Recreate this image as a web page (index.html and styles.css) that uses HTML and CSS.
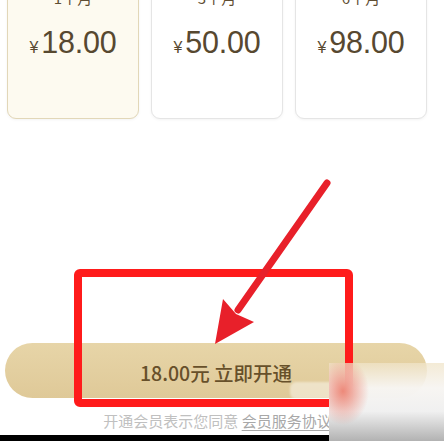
FILE: index.html
```html
<!DOCTYPE html>
<html lang="zh-CN">
<head>
<meta charset="utf-8">
<title>开通会员</title>
<link rel="stylesheet" href="styles.css">
</head>
<body>
<div class="page">
  <div class="plans">
    <div class="plan active">
      <div class="plan-name">1个月</div>
      <div class="plan-price"><span class="cur">¥</span>18.00</div>
    </div>
    <div class="plan">
      <div class="plan-name">3个月</div>
      <div class="plan-price"><span class="cur">¥</span>50.00</div>
    </div>
    <div class="plan">
      <div class="plan-name">6个月</div>
      <div class="plan-price"><span class="cur">¥</span>98.00</div>
    </div>
  </div>
  <button class="buy">18.00元 立即开通</button>
  <p class="agree">开通会员表示您同意 <a class="agree-link">会员服务协议</a></p>
  <div class="bottom-bar"></div>
</div>
<div class="glare"></div>
<div class="highlight-box"></div>
<svg class="arrow" width="444" height="441" viewBox="0 0 444 441">
  <line x1="327" y1="183" x2="238" y2="310" stroke="#e8202a" stroke-width="7" stroke-linecap="round"/>
  <polygon points="215,344 223,299 236,314 254,322" fill="#e8202a"/>
</svg>
<div class="watermark"></div>
</body>
</html>
```

FILE: styles.css
```css
html, body {
  margin: 0;
  padding: 0;
  width: 444px;
  height: 441px;
  overflow: hidden;
  background: #ffffff;
}

.page {
  padding-left: 7px;
  width: 421px;
  display: flex;
  flex-direction: column;
  font-family: "Liberation Sans", "Noto Sans CJK SC", sans-serif;
}

.plans {
  display: grid;
  grid-template-columns: repeat(3, 132px);
  column-gap: 12px;
  margin-top: -26px;
}

.plan {
  box-sizing: border-box;
  height: 145px;
  border: 1.5px solid #e5e5e5;
  border-radius: 9px;
  padding-top: 13px;
  display: flex;
  flex-direction: column;
  align-items: center;
  background: #ffffff;
  box-shadow: 0 1px 3px rgba(0, 0, 0, 0.05);
}

.plan.active {
  background: #fdfaf0;
  border-color: #e2d7b8;
}

.plan-name {
  font-family: "Noto Sans CJK SC", sans-serif;
  font-size: 15px;
  line-height: 20px;
  color: #5f4e33;
}

.plan-price {
  margin-top: 16px;
  font-size: 30.5px;
  line-height: 36px;
  color: #574830;
  letter-spacing: -0.2px;
}

.cur {
  font-size: 16px;
  margin-right: 3px;
}

.buy {
  margin-top: 224px;
  margin-left: -2px;
  width: 422px;
  height: 55px;
  border: none;
  border-radius: 28px;
  padding: 3px 0 0;
  background: linear-gradient(180deg, #e7d5a8 0%, #dfc998 100%);
  font-family: "Noto Sans CJK SC", sans-serif;
  font-size: 19.5px;
  font-weight: 500;
  color: #67502a;
}

.agree {
  margin: 13px 0 0;
  height: 20px;
  line-height: 20px;
  text-align: center;
  font-family: "Noto Sans CJK SC", sans-serif;
  font-size: 15px;
  color: #c0c0c0;
}

.agree-link {
  color: #a8a8a8;
  text-decoration: underline;
  text-underline-offset: 3px;
}

.bottom-bar {
  margin-top: 4px;
  margin-left: -7px;
  width: 444px;
  height: 6px;
  background: #000000;
}

.glare {
  position: absolute;
  left: 290px;
  top: 382px;
  width: 45px;
  height: 17px;
  border-radius: 6px;
  background: rgba(255, 255, 255, 0.45);
  filter: blur(1px);
}

.highlight-box {
  position: absolute;
  left: 74px;
  top: 269px;
  width: 279px;
  height: 138px;
  box-sizing: border-box;
  border: 8.5px solid #ff1b1b;
  border-radius: 6px;
}

.arrow {
  position: absolute;
  left: 0;
  top: 0;
}

.watermark {
  position: absolute;
  left: 329px;
  top: 363px;
  width: 115px;
  height: 78px;
  background:
    radial-gradient(ellipse 26px 34px at 14px 28px, rgba(236, 125, 108, 0.9), rgba(236, 125, 108, 0) 100%),
    linear-gradient(180deg, rgba(240, 228, 200, 0.75) 0%, rgba(247, 245, 242, 0.98) 32%, #f0f0f0 62%, #b2b2b2 100%);
}
```
